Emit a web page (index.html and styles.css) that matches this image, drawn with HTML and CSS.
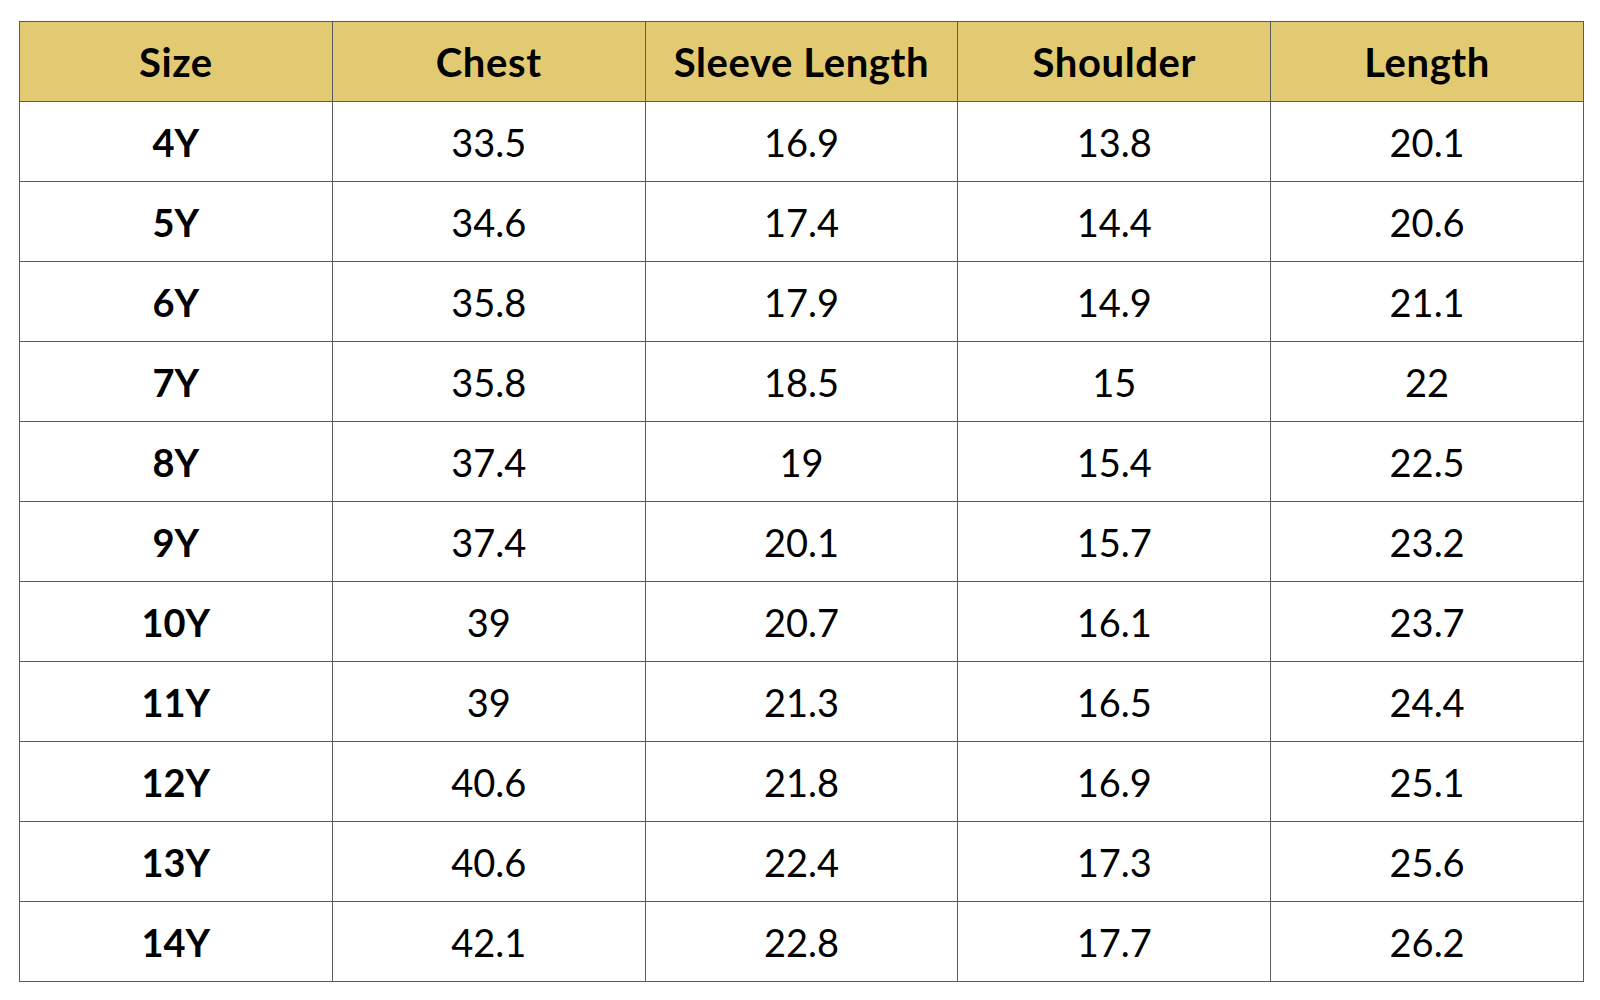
FILE: index.html
```html
<!DOCTYPE html>
<html>
<head>
<meta charset="utf-8">
<link rel="stylesheet" href="styles.css">
</head>
<body>
<table class="size-table">
<thead>
<tr><th>Size</th><th>Chest</th><th>Sleeve Length</th><th>Shoulder</th><th>Length</th></tr>
</thead>
<tbody>
<tr><td class="size">4Y</td><td>33.5</td><td>16.9</td><td>13.8</td><td>20.1</td></tr>
<tr><td class="size">5Y</td><td>34.6</td><td>17.4</td><td>14.4</td><td>20.6</td></tr>
<tr><td class="size">6Y</td><td>35.8</td><td>17.9</td><td>14.9</td><td>21.1</td></tr>
<tr><td class="size">7Y</td><td>35.8</td><td>18.5</td><td>15</td><td>22</td></tr>
<tr><td class="size">8Y</td><td>37.4</td><td>19</td><td>15.4</td><td>22.5</td></tr>
<tr><td class="size">9Y</td><td>37.4</td><td>20.1</td><td>15.7</td><td>23.2</td></tr>
<tr><td class="size">10Y</td><td>39</td><td>20.7</td><td>16.1</td><td>23.7</td></tr>
<tr><td class="size">11Y</td><td>39</td><td>21.3</td><td>16.5</td><td>24.4</td></tr>
<tr><td class="size">12Y</td><td>40.6</td><td>21.8</td><td>16.9</td><td>25.1</td></tr>
<tr><td class="size">13Y</td><td>40.6</td><td>22.4</td><td>17.3</td><td>25.6</td></tr>
<tr><td class="size">14Y</td><td>42.1</td><td>22.8</td><td>17.7</td><td>26.2</td></tr>
</tbody>
</table>
</body>
</html>
```
FILE: styles.css
```css
html, body {
  margin: 0;
  padding: 0;
  background: #ffffff;
}
body {
  padding: 21px 0 0 19px;
  font-family: Lato, "Liberation Sans", sans-serif;
  color: #000;
}
.size-table {
  border-collapse: collapse;
  table-layout: fixed;
  width: 1565px;
}
.size-table th,
.size-table td {
  border: 1.5px solid #5a5a5a;
  height: 79px;
  padding: 0;
  text-align: center;
  vertical-align: middle;
  font-size: 38px;
  line-height: 1;
}
.size-table th {
  background: #e2ca72;
  font-weight: 700;
  font-size: 40px;
  letter-spacing: 0.6px;
}
.size-table td {
  font-weight: 400;
}
.size-table td.size {
  font-weight: 700;
}
```
